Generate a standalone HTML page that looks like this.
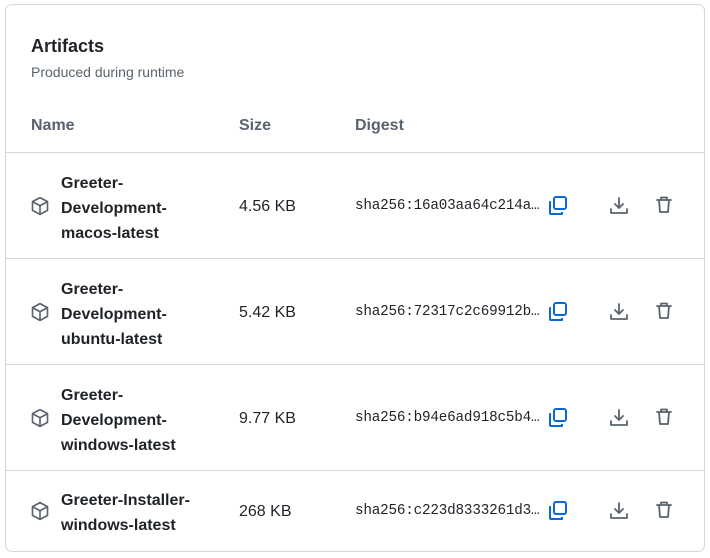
<!DOCTYPE html>
<html><head><style>
*{margin:0;padding:0;box-sizing:border-box}
body{width:710px;height:558px;background:#fff;font-family:"Liberation Sans",sans-serif;color:#1f2328;position:relative;overflow:hidden}
.card{position:absolute;left:5px;top:4px;width:700px;height:548px;border:1px solid #d1d9e0;border-radius:7px}
.t{position:absolute;left:31px;top:36px;font-size:18px;font-weight:bold}
.s{position:absolute;left:31px;top:64px;font-size:14px;color:#59636e}
.h{position:absolute;top:117px;font-size:16px;font-weight:bold;color:#59636e}
.line{position:absolute;left:6px;width:698px;height:1px;background:#d1d9e0}
.nm{position:absolute;left:61px;font-size:16px;font-weight:bold;line-height:25px;width:150px}
.sz{position:absolute;left:239px;font-size:16px}
.dg{position:absolute;left:355px;font-family:"Liberation Mono",monospace;font-size:14.3px;letter-spacing:-0.2px}
svg{position:absolute}
</style></head><body>
<div class="card"></div>
<div class="t">Artifacts</div>
<div class="s">Produced during runtime</div>
<div class="h" style="left:31px">Name</div>
<div class="h" style="left:239px">Size</div>
<div class="h" style="left:355px">Digest</div>
<div class="line" style="top:152px"></div>
<div class="line" style="top:258px"></div>
<div class="line" style="top:364px"></div>
<div class="line" style="top:470px"></div>

<div id="rows"></div>
<script>
const data=[
[153,["Greeter-","Development-","macos-latest"],"4.56 KB","sha256:16a03aa64c214a…"],
[259,["Greeter-","Development-","ubuntu-latest"],"5.42 KB","sha256:72317c2c69912b…"],
[365,["Greeter-","Development-","windows-latest"],"9.77 KB","sha256:b94e6ad918c5b4…"],
[471,["Greeter-Installer-","windows-latest"],"268 KB","sha256:c223d8333261d3…"]];
let h='';
for(const [top,n,s,d] of data){
const mid=top+ (top==471?40:53);
const nt=mid-n.length*25/2+2;
h+=`<div class="nm" style="top:${nt}px">${n.join('<br>')}</div>
<div class="sz" style="top:${mid-8}px">${s}</div>
<div class="dg" style="top:${mid-8}px">${d}</div>
<svg style="left:30px;top:${mid-10}px" width="20" height="20" viewBox="0 0 16 16" fill="none" stroke="#59636e" stroke-width="1.3" stroke-linejoin="round"><path d="M8 1.3 14 4.5v7L8 14.7 2 11.5v-7z"/><path d="M2 4.5 8 7.8l6-3.3M8 7.8v6.9"/></svg>
<svg style="left:547px;top:${mid-11}px" width="22" height="22" viewBox="0 0 22 22" fill="none" stroke="#0969da" stroke-width="2" stroke-linejoin="round"><rect x="7" y="2" width="12" height="12" rx="2"/><path d="M4 7H3v11a1 1 0 0 0 1 1h11v-2"/></svg>
<svg style="left:609px;top:${mid-10}px" width="20" height="20" viewBox="0 0 20 20" fill="none" stroke="#59636e" stroke-width="1.8" stroke-linecap="round" stroke-linejoin="round"><path d="M10 2v10M6 8l4 4 4-4M2 13v4h16v-4"/></svg>
<svg style="left:654px;top:${mid-11}px" width="20" height="20" viewBox="0 0 20 20" fill="none" stroke="#59636e" stroke-width="1.8" stroke-linecap="round" stroke-linejoin="round"><path d="M3 5h14M7 5V2.5h6V5M5 5l1 12h8l1-12"/></svg>`;
}
document.getElementById('rows').innerHTML=h;
</script>
</body></html>
